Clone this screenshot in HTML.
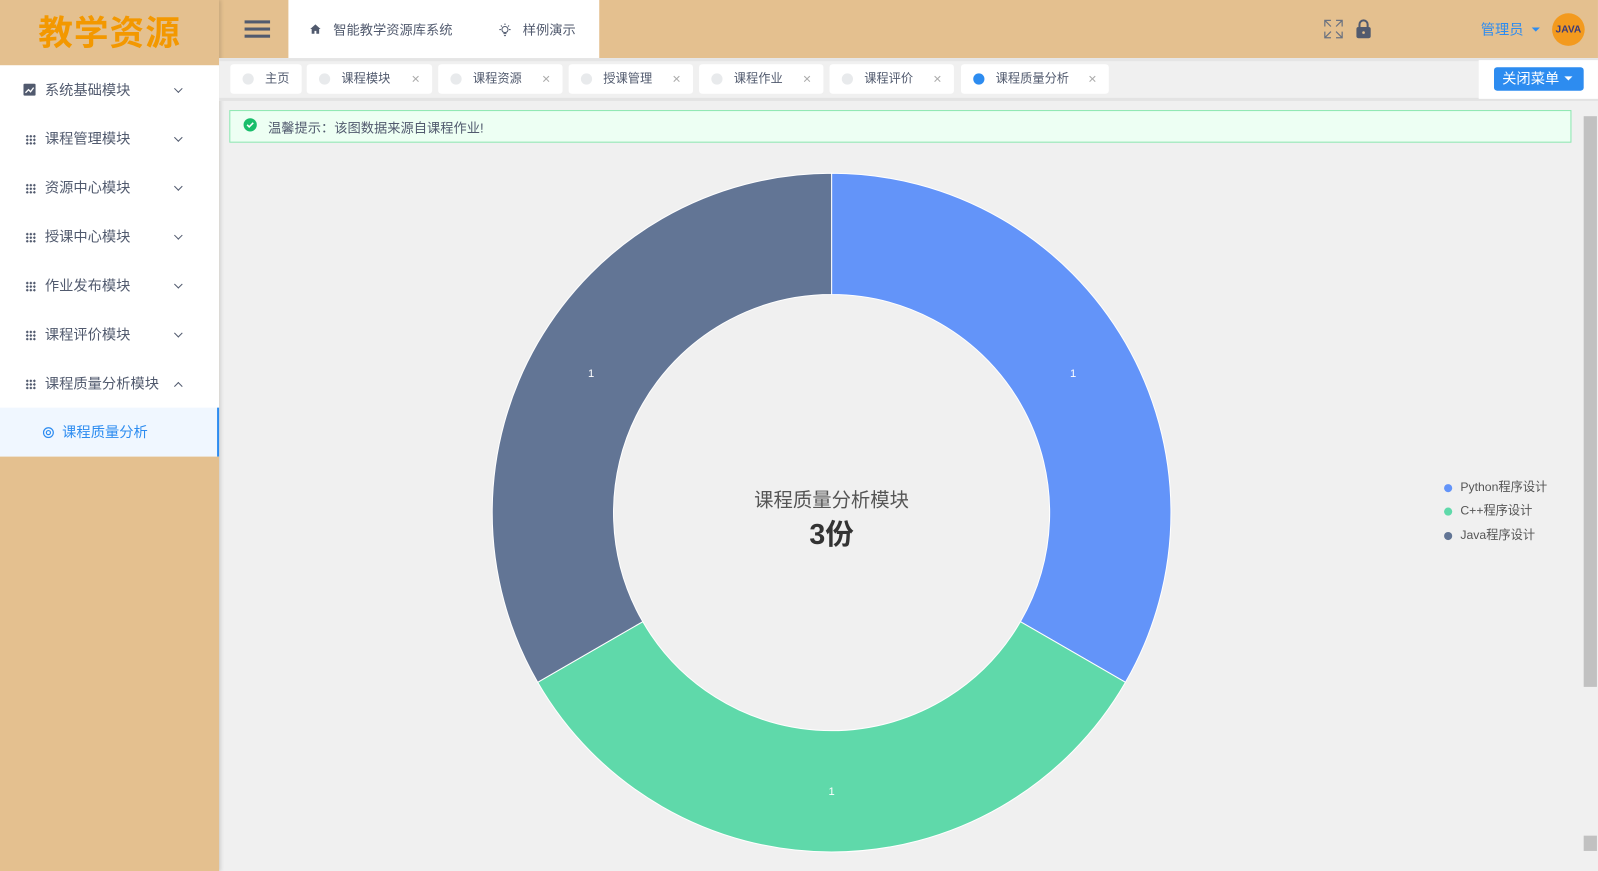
<!DOCTYPE html>
<html><head><meta charset="utf-8"><style>
*{margin:0;padding:0;box-sizing:border-box}
body{width:1598px;height:871px;overflow:hidden;background:#f0f0f0;font-family:"Liberation Sans","Noto Sans CJK SC",sans-serif;}
#w{position:absolute;left:0;top:0;width:1568px;height:855px;transform:scale(1.0191);transform-origin:0 0;background:#f0f0f0}
.a{position:absolute}
.side{left:0;top:0;width:215px;height:855px;background:#e4c08f;box-shadow:2px 0 4px rgba(0,0,0,.15)}
.logo{left:0;top:0;width:215px;height:64px;text-align:center;line-height:60px;font-size:34px;color:#f39800;font-weight:bold;letter-spacing:1px;font-family:"WenQuanYi Zen Hei","Noto Sans CJK SC",sans-serif}
.menu{left:0;top:64px;width:215px;background:#fff}
.mi{height:48px;position:relative;font-size:14px;color:#515a6e;line-height:48px;padding-left:44px}
.mi .ic{position:absolute;left:25px;top:20px;width:10px;height:10px;background:radial-gradient(circle,#515a6e 1.1px,transparent 1.3px) 0 0/3.5px 3.5px}
.mi .ar{position:absolute;left:172px;top:20px;width:6px;height:6px;border-right:1.3px solid #515a6e;border-bottom:1.3px solid #515a6e;transform:rotate(45deg)}
.mi .up{top:24px;transform:rotate(-135deg)}
.sub{height:48px;background:#f0f7ff;color:#2d8cf0;font-size:14px;line-height:48px;padding-left:61px;border-right:2px solid #2d8cf0;position:relative}
.tab{top:63px;height:29px;background:#fff;border-radius:3px;font-size:12px;color:#515a6e;line-height:29px}
.tab .d{position:absolute;left:12px;top:9px;width:11px;height:11px;border-radius:50%;background:#e8eaec}
.tab .t{position:absolute;left:34px}
.tab .x{position:absolute;right:12px;color:#aaa;font-size:14px}
</style></head><body><div id="w">
<div class="a" style="left:0;top:0;width:1568px;height:57px;background:#e4c08f"></div>
<div class="a" style="left:283px;top:0;width:305px;height:57px;background:#fff"></div>
<div class="a" style="left:240px;top:20px;width:25px;height:3px;background:#515a6e;box-shadow:0 7px 0 #515a6e,0 14px 0 #515a6e"></div>
<svg class="a" style="left:304px;top:23px" width="11" height="11" viewBox="0 0 12 12"><path d="M6 1L0.5 6H2v5h3V8h2v3h3V6h1.5z" fill="#515a6e"/></svg>
<div class="a" style="left:327px;top:19px;font-size:13px;color:#515a6e">智能教学资源库系统</div>
<svg class="a" style="left:489px;top:22px" width="13" height="14" viewBox="0 0 13 14" fill="none" stroke="#515a6e" stroke-width="1"><circle cx="6.5" cy="7" r="3"/><path d="M5 11h3M5.5 13h2M6.5 1v1.5M1 7h1.5M10.5 7H12M2.5 3l1 1M10.5 3l-1 1"/></svg>
<div class="a" style="left:513px;top:19px;font-size:13px;color:#515a6e">样例演示</div>
<svg class="a" style="left:1299px;top:19px" width="19" height="19" viewBox="0 0 19 19" fill="none" stroke="#6b7280" stroke-width="1.2"><path d="M1 7V1h6M1 1l6 6M12 1h6v6M18 1l-6 6M1 12v6h6M1 18l6-6M18 12v6h-6M18 18l-6-6"/></svg>
<svg class="a" style="left:1330px;top:18px" width="16" height="20" viewBox="0 0 16 20"><path d="M4 9V6a4 4 0 0 1 8 0v3" fill="none" stroke="#515a6e" stroke-width="2"/><rect x="1" y="8.5" width="14" height="11" rx="2" fill="#515a6e"/><circle cx="8" cy="14" r="1.3" fill="#e4c08f"/></svg>
<div class="a" style="left:1453px;top:19px;font-size:14px;color:#2d8cf0">管理员</div>
<div class="a" style="left:1503px;top:27px;border:4px solid transparent;border-top:4px solid #2d8cf0"></div>
<div class="a" style="left:1523px;top:13px;width:32px;height:32px;border-radius:50%;background:#f39a1e;color:#3a3a7a;font-size:10px;font-weight:bold;text-align:center;line-height:34px">JAVA</div>

<div class="a side"></div>
<div class="a logo">教学资源</div>
<div class="a menu">
<div class="mi"><svg style="position:absolute;left:23px;top:18px" width="12" height="12"><rect width="12" height="12" rx="1.5" fill="#515a6e"/><path d="M2 9l3-3 2 2 3-4" stroke="#fff" stroke-width="1.3" fill="none"/></svg>系统基础模块<span class="ar"></span></div>
<div class="mi"><span class="ic"></span>课程管理模块<span class="ar"></span></div>
<div class="mi"><span class="ic"></span>资源中心模块<span class="ar"></span></div>
<div class="mi"><span class="ic"></span>授课中心模块<span class="ar"></span></div>
<div class="mi"><span class="ic"></span>作业发布模块<span class="ar"></span></div>
<div class="mi"><span class="ic"></span>课程评价模块<span class="ar"></span></div>
<div class="mi"><span class="ic"></span>课程质量分析模块<span class="ar up"></span></div>
<div class="sub"><svg style="position:absolute;left:42px;top:19px" width="11" height="11" viewBox="0 0 11 11" fill="none" stroke="#2d8cf0" stroke-width="1.2"><circle cx="5.5" cy="5.5" r="4.8"/><circle cx="5.5" cy="5.5" r="2"/></svg>课程质量分析</div>
</div>

<div class="a" style="left:215px;top:57px;width:1353px;height:42px;background:#f0f0f0;border-top:3px solid #e5e5e5;border-bottom:3px solid #e3e3e3"></div>
<div class="a tab" style="left:226px;width:70px"><span class="d"></span><span class="t">主页</span></div>
<div class="a tab" style="left:301px;width:123px"><span class="d"></span><span class="t">课程模块</span><span class="x">×</span></div>
<div class="a tab" style="left:430px;width:122px"><span class="d"></span><span class="t">课程资源</span><span class="x">×</span></div>
<div class="a tab" style="left:558px;width:122px"><span class="d"></span><span class="t">授课管理</span><span class="x">×</span></div>
<div class="a tab" style="left:686px;width:122px"><span class="d"></span><span class="t">课程作业</span><span class="x">×</span></div>
<div class="a tab" style="left:814px;width:122px"><span class="d"></span><span class="t">课程评价</span><span class="x">×</span></div>
<div class="a tab" style="left:943px;width:145px"><span class="d" style="background:#2d8cf0"></span><span class="t">课程质量分析</span><span class="x">×</span></div>
<div class="a" style="left:1451px;top:59px;width:117px;height:38px;background:#fff"></div>
<div class="a" style="left:1466px;top:66px;width:88px;height:23px;background:#2d8cf0;border-radius:3px;color:#fff;font-size:14px;line-height:23px;padding-left:8px">关闭菜单</div>
<div class="a" style="left:1535px;top:75px;border:4px solid transparent;border-top:4px solid #fff"></div>

<div class="a" style="left:225px;top:108px;width:1317px;height:32px;background:#edfff3;border:1px solid #8ce6b0"></div>
<div class="a" style="left:239px;top:116px;width:13px;height:13px;border-radius:50%;background:#19be6b"></div>
<svg class="a" style="left:239px;top:116px" width="13" height="13"><path d="M3.5 6.5l2 2 4-4" stroke="#fff" stroke-width="1.5" fill="none"/></svg>
<div class="a" style="left:263px;top:115px;font-size:13px;color:#515a6e">温馨提示：该图数据来源自课程作业!</div>

<div class="a" style="left:1553px;top:112px;width:15px;height:743px;background:#f0f0f0"></div>
<div class="a" style="left:1554px;top:114px;width:13px;height:560px;background:#c1c1c1"></div>
<div class="a" style="left:1554px;top:820px;width:13px;height:15px;background:#c1c1c1"></div>

<svg class="a" style="left:0;top:0" width="1568" height="855">
<g stroke="#fff" stroke-width="1">
<path d="M816 170A333 333 0 0 1 1104.4 669.5L1001.3 610A214 214 0 0 0 816 289Z" fill="#6394f9"/>
<path d="M1104.4 669.5A333 333 0 0 1 527.6 669.5L630.7 610A214 214 0 0 0 1001.3 610Z" fill="#5fd9aa"/>
<path d="M527.6 669.5A333 333 0 0 1 816 170L816 289A214 214 0 0 0 630.7 610Z" fill="#627595"/>
</g>
<g fill="#fff" font-size="11" text-anchor="middle" font-family="Liberation Sans"><text x="1053" y="370">1</text><text x="580" y="370">1</text><text x="816" y="780">1</text></g>
<text x="816" y="497" text-anchor="middle" font-size="19" fill="#555" font-family="Liberation Sans,Noto Sans CJK SC">课程质量分析模块</text>
<text x="816" y="534" text-anchor="middle" font-size="28" font-weight="bold" fill="#333" font-family="Liberation Sans,Noto Sans CJK SC">3份</text>
<g font-size="12" fill="#555" font-family="Liberation Sans,Noto Sans CJK SC">
<circle cx="1421" cy="479" r="4" fill="#6394f9"/><text x="1433" y="482">Python程序设计</text>
<circle cx="1421" cy="502" r="4" fill="#5fd9aa"/><text x="1433" y="505">C++程序设计</text>
<circle cx="1421" cy="526" r="4" fill="#627595"/><text x="1433" y="529">Java程序设计</text>
</g>
</svg>
</div></body></html>
